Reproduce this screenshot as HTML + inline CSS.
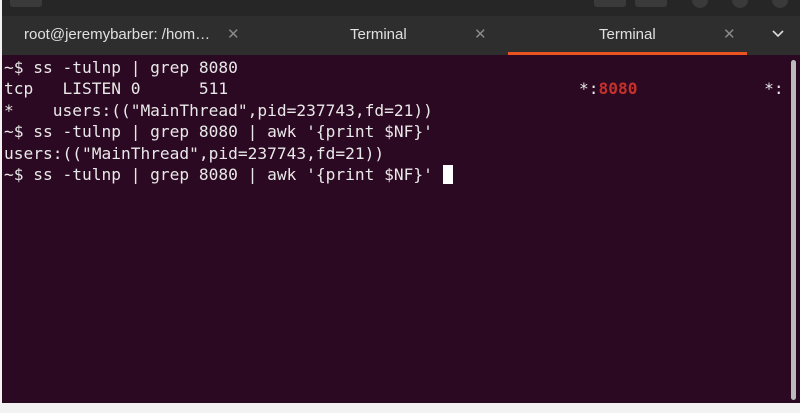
<!DOCTYPE html>
<html><head><meta charset="utf-8"><style>
html,body{margin:0;padding:0;width:800px;height:413px;overflow:hidden;background:#f2f2f2;}
.win{position:absolute;left:2px;top:0;width:798px;height:403px;background:#2c0922;}
.title{position:absolute;left:0;top:0;width:798px;height:16px;background:#262626;}
.btn{position:absolute;top:-4px;height:11px;width:32px;background:#3a3a3a;border-radius:3px;}
.circ{position:absolute;top:-8px;width:16px;height:16px;border-radius:50%;background:#3a3a3a;}
.tabs{position:absolute;left:0;top:16px;width:798px;height:39px;background:#2e2e2e;font-family:"Liberation Sans",sans-serif;font-size:15px;color:#e0e0e0;}
.tab{position:absolute;top:10px;}
.x{position:absolute;top:9px;color:#8a8a8a;font-size:15px;}
.ul{position:absolute;left:506px;top:36px;width:239px;height:3px;background:#e95420;}
.term{position:absolute;left:2px;top:57px;font-family:"DejaVu Sans Mono","Liberation Mono",monospace;font-size:16.2px;line-height:21.4px;color:#e8e8e8;white-space:pre;}
.red{color:#c4302a;font-weight:bold;}
.cur{display:inline-block;width:10px;height:19px;background:#fff;vertical-align:-4px;}
.sb{position:absolute;left:789px;top:60px;width:5px;height:340px;background:#bbb;border-radius:3px;}
</style></head><body>
<div class="win">
<div class="title">
<div class="btn" style="left:8px"></div>
<div class="btn" style="left:592px"></div>
<div class="btn" style="left:633px"></div>
<div class="circ" style="left:690px"></div>
<div class="circ" style="left:730px"></div>
<div class="circ" style="left:770px"></div>
</div>
<div class="tabs">
<div class="tab" style="left:22px">root@jeremybarber: /hom…</div>
<div class="x" style="left:225px">✕</div>
<div class="tab" style="left:348px">Terminal</div>
<div class="x" style="left:472px">✕</div>
<div class="tab" style="left:597px">Terminal</div>
<div class="x" style="left:721px">✕</div>
<svg style="position:absolute;left:770px;top:14px" width="12" height="8"><path d="M1 1 L6 6 L11 1" stroke="#ddd" stroke-width="1.6" fill="none"/></svg>
<div class="ul"></div>
</div>
<div class="term">~$ ss -tulnp | grep 8080
tcp   LISTEN 0      511                                    *:<span class="red">8080</span>             *:
*    users:(("MainThread",pid=237743,fd=21))
~$ ss -tulnp | grep 8080 | awk '{print $NF}'
users:(("MainThread",pid=237743,fd=21))
~$ ss -tulnp | grep 8080 | awk '{print $NF}' <span class="cur"></span></div>
<div class="sb"></div>
</div>
</body></html>
